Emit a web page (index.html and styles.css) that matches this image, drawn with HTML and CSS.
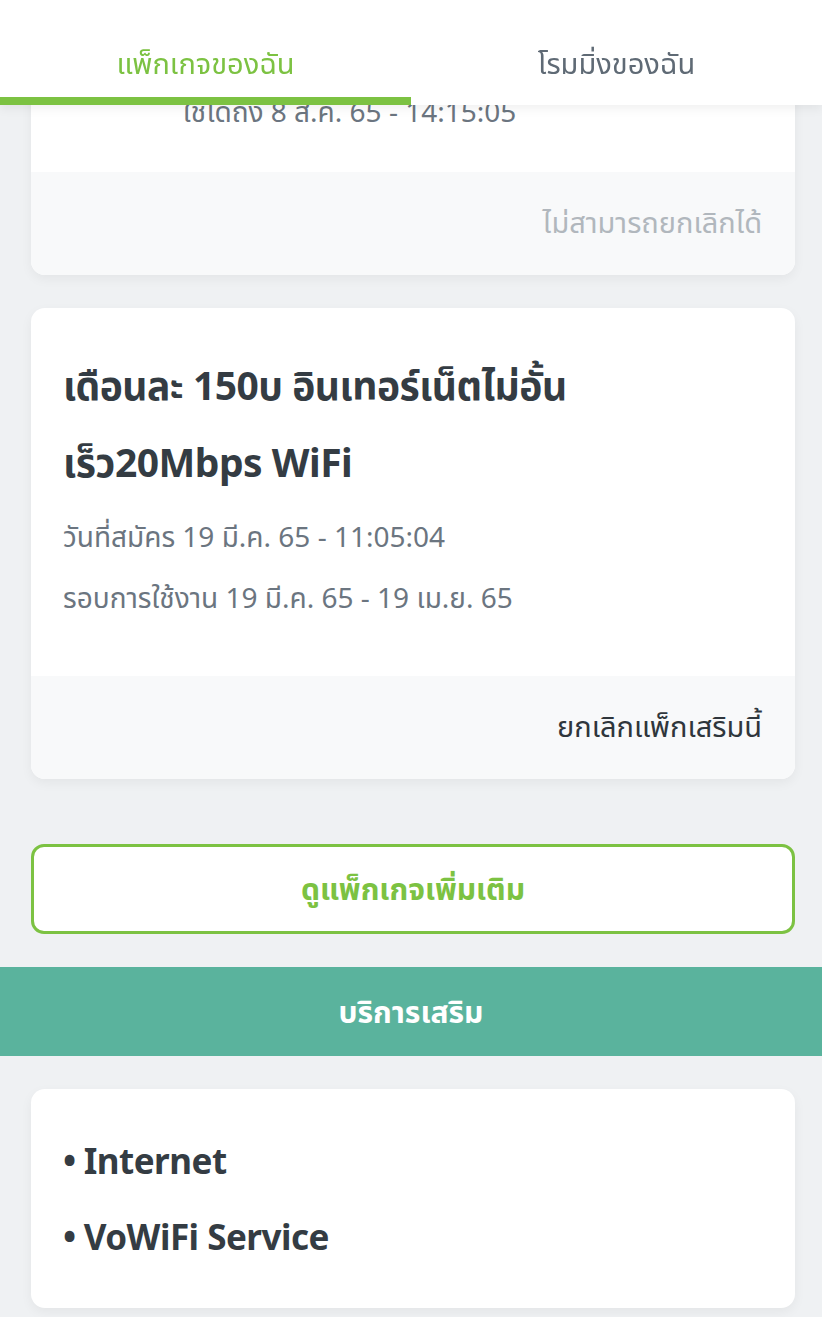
FILE: index.html
```html
<!DOCTYPE html>
<html lang="th">
<head>
  <meta charset="UTF-8" />
  <meta name="viewport" content="width=device-width, initial-scale=1.0" />
  <title>แพ็กเกจของฉัน</title>
  <link rel="stylesheet" href="styles.css">
</head>
<body>
  <header class="tabs">
    <a href="#" class="tab active">แพ็กเกจของฉัน</a>
    <a href="#" class="tab">โรมมิ่งของฉัน</a>
  </header>

  <main class="content">
    <div class="card">
      <div class="card-body">
        <p class="meta meta-indent">ใช้ได้ถึง 8 ส.ค. 65 - 14:15:05</p>
      </div>
      <div class="card-footer">
        <span class="disabled">ไม่สามารถยกเลิกได้</span>
      </div>
    </div>

    <div class="card">
      <div class="card-body">
        <h2 class="pkg-title">เดือนละ 150บ อินเทอร์เน็ตไม่อั้น<br>เร็ว20Mbps WiFi</h2>
        <p class="meta">วันที่สมัคร 19 มี.ค. 65 - 11:05:04</p>
        <p class="meta">รอบการใช้งาน 19 มี.ค. 65 - 19 เม.ย. 65</p>
      </div>
      <div class="card-footer">
        <a href="#" class="cancel">ยกเลิกแพ็กเสริมนี้</a>
      </div>
    </div>

    <a href="#" class="more-button">ดูแพ็กเกจเพิ่มเติม</a>
  </main>

  <div class="section-bar">บริการเสริม</div>

  <section class="content">
    <div class="card services">
      <ul>
        <li>Internet</li>
        <li>VoWiFi Service</li>
      </ul>
    </div>
  </section>
</body>
</html>
```

FILE: styles.css
```css
body {
  font-family: "Noto Sans", "Noto Sans Thai", sans-serif;
  background-color: #eff1f3;
  margin: 0;
  padding: 0;
  color: #343c43;
}
a {
  text-decoration: none;
}
.tabs {
  position: fixed;
  top: 0;
  left: 0;
  right: 0;
  height: 105px;
  background: #fff;
  display: flex;
  box-shadow: 0 4px 10px rgba(0, 0, 0, 0.06);
  z-index: 10;
}
.tab {
  flex: 1;
  display: flex;
  align-items: center;
  justify-content: center;
  padding-top: 32px;
  box-sizing: border-box;
  font-size: 29px;
  color: #5f6a75;
  border-bottom: 8px solid transparent;
}
.tab.active {
  color: #7cc242;
  border-bottom-color: #7cc242;
}
.content {
  padding: 53px 27px 0 31px;
}
.card {
  background-color: #fff;
  border-radius: 14px;
  box-shadow: 0 4px 12px rgba(0, 0, 0, 0.05);
  overflow: hidden;
  margin-bottom: 33px;
}
.card-body {
  padding: 28px 32px 30px;
}
.card-body .pkg-title + .meta + .meta {
  margin-bottom: 18px;
}
.pkg-title {
  margin: 10px 0 6px;
  font-size: 39px;
  line-height: 77px;
  font-weight: 700;
  letter-spacing: -0.5px;
}
.meta {
  margin: 0;
  font-size: 28px;
  line-height: 61px;
  color: #6b7580;
}
.meta-indent {
  padding-left: 120px;
}
.card-footer {
  background: #f8f9fa;
  height: 103px;
  padding: 0 33px 0 32px;
  display: flex;
  align-items: center;
  justify-content: flex-end;
  font-size: 29px;
}
.disabled {
  color: #b1b7bd;
}
.cancel {
  color: #2f363c;
}
.more-button {
  display: block;
  height: 84px;
  line-height: 84px;
  margin: 65px 0 33px;
  border: 3px solid #7cc242;
  border-radius: 13px;
  background: #fff;
  text-align: center;
  color: #7cc242;
  font-size: 30px;
  font-weight: 700;
}
.section-bar {
  height: 89px;
  line-height: 89px;
  background: #5ab39d;
  color: #fff;
  text-align: center;
  font-size: 30px;
  font-weight: 700;
}
.content + .section-bar + .content {
  padding-top: 33px;
}
.services ul {
  margin: 0;
  padding: 34px 32px 33px;
  list-style: none;
}
.services li {
  font-size: 35px;
  font-weight: 700;
  line-height: 76px;
  letter-spacing: -0.5px;
}
.services li::before {
  content: "•";
  margin-right: 8px;
}
```
